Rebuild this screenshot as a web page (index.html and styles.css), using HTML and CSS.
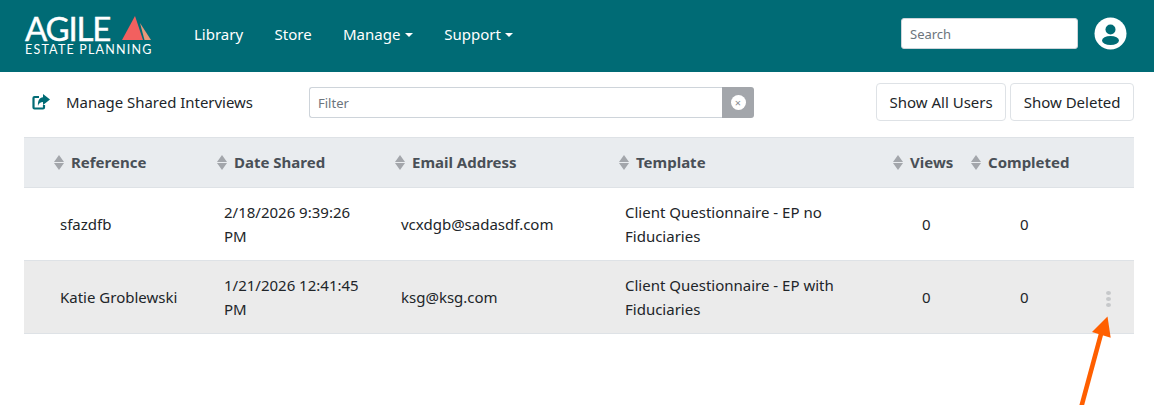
FILE: index.html
```html
<!DOCTYPE html>
<html lang="en">
<head>
<meta charset="utf-8">
<title>Manage Shared Interviews</title>
<link rel="stylesheet" href="styles.css">
</head>
<body>
<nav class="navbar">
  <a class="brand">
    <span class="brand-top"><span class="brand-agile">AGILE</span>
      <svg class="brand-mark" width="30" height="25" viewBox="0 0 30 25"><polygon points="13,1 0,25 21,25" fill="#f2605f"/><polygon points="18,8 29,25 22.500,25" fill="#e8987a"/></svg>
    </span>
    <span class="brand-sub">ESTATE PLANNING</span>
  </a>
  <ul class="nav-links">
    <li>Library</li>
    <li>Store</li>
    <li class="caret">Manage</li>
    <li class="caret">Support</li>
  </ul>
  <input class="nav-search" type="text" placeholder="Search">
  <svg class="avatar" width="33" height="33" viewBox="0 0 33 33"><circle cx="16.500" cy="16.500" r="16" fill="#fff"/><circle cx="16.500" cy="12.500" r="5" fill="#006b75"/><ellipse cx="16.500" cy="23.500" rx="8.500" ry="4.500" fill="#006b75"/></svg>
</nav>

<main class="content">
  <div class="toolbar">
    <svg class="share-icon" width="18" height="16" viewBox="0 0 18 16"><path d="M7 3H2.500A1 1 0 0 0 1.500 4v9.500a1 1 0 0 0 1 1H11a1 1 0 0 0 1-1V11" fill="none" stroke="#006b75" stroke-width="2.200"/><path d="M11 0l7 5.500-7 5.500V8C8.500 8 7 9 6 12 5.500 7 7.500 3.500 11 3.300z" fill="#006b75"/></svg>
    <span class="page-title">Manage Shared Interviews</span>
    <div class="filter">
      <input class="filter-input" type="text" placeholder="Filter">
      <span class="filter-clear"><span class="clear-dot">×</span></span>
    </div>
    <div class="toolbar-buttons">
      <button class="btn">Show All Users</button>
      <button class="btn">Show Deleted</button>
    </div>
  </div>

  <table class="grid">
    <colgroup>
      <col class="c-ref"><col class="c-date"><col class="c-email"><col class="c-tpl"><col class="c-views"><col class="c-done"><col class="c-menu">
    </colgroup>
    <thead>
      <tr>
        <th><span class="sort"></span>Reference</th>
        <th><span class="sort"></span>Date Shared</th>
        <th><span class="sort"></span>Email Address</th>
        <th><span class="sort"></span>Template</th>
        <th><span class="sort"></span>Views</th>
        <th><span class="sort"></span>Completed</th>
        <th></th>
      </tr>
    </thead>
    <tbody>
      <tr>
        <td>sfazdfb</td>
        <td class="date">2/18/2026 9:39:26 PM</td>
        <td>vcxdgb@sadasdf.com</td>
        <td>Client Questionnaire - EP no Fiduciaries</td>
        <td class="num-views">0</td>
        <td class="num-done">0</td>
        <td></td>
      </tr>
      <tr class="hover">
        <td>Katie Groblewski</td>
        <td class="date">1/21/2026 12:41:45 PM</td>
        <td>ksg@ksg.com</td>
        <td>Client Questionnaire - EP with Fiduciaries</td>
        <td class="num-views">0</td>
        <td class="num-done">0</td>
        <td class="menu"><span class="dots"><i></i><i></i><i></i></span></td>
      </tr>
    </tbody>
  </table>
</main>

<svg class="arrow" width="40" height="92" viewBox="0 0 40 92"><path d="M29 18 9.500 90" stroke="#ff5f00" stroke-width="4.600" fill="none"/><polygon points="35.500,0.500 20,16 38.700,21.700" fill="#ff5f00"/></svg>
</body>
</html>
```
FILE: styles.css
```css
* { box-sizing: border-box; }
html, body { margin: 0; padding: 0; }
body {
  position: relative;
  height: 405px;
  overflow: hidden;
  background: #fff;
  color: #212529;
  font-family: "Noto Sans", "Open Sans", sans-serif;
  font-size: 15px;
  line-height: 24px;
}
.navbar {
  display: flex;
  align-items: center;
  height: 72px;
  padding: 0 27px 5px 25px;
  background: #006b75;
}
.brand { display: flex; flex-direction: column; width: 129px; color: #fff; margin-top: 5px; }
.brand-top { display: flex; align-items: flex-end; height: 25px; }
.brand-agile {
  font-family: Lato, sans-serif;
  font-size: 33px;
  line-height: 24px;
  letter-spacing: -1.2px;
  width: 97px;
  flex: none;
  -webkit-text-stroke: 0.4px #fff;
}
.brand-sub {
  font-family: Lato, sans-serif;
  font-size: 12.500px;
  line-height: 14px;
  letter-spacing: 1.200px;
  white-space: nowrap;
  margin-top: 3px;
}
.nav-links { display: flex; gap: 31.400px; margin: 0 0 0 40px; padding: 0; list-style: none; color: #fff; }
.caret::after {
  content: "";
  display: inline-block;
  margin-left: 4.500px;
  vertical-align: 3px;
  border-top: 4px solid #fff;
  border-left: 4px solid transparent;
  border-right: 4px solid transparent;
}
.nav-search {
  width: 177px;
  height: 31px;
  margin-left: auto;
  padding: 0 8px;
  border: 1px solid #ced4da;
  border-radius: 3px;
  font: inherit;
  font-size: 13px;
}
.avatar { margin-left: 16px; }
input::placeholder { color: #6c757d; opacity: 1; }
.content { padding: 11px 20px 0 24px; }
.toolbar { display: flex; align-items: center; height: 38px; }
.share-icon { margin-left: 8px; flex: none; }
.page-title { margin-left: 16px; width: 243px; font-size: 14.950px; white-space: nowrap; }
.filter { display: flex; width: 445px; height: 31px; }
.filter-input {
  flex: 1;
  min-width: 0;
  padding: 1px 8px 0;
  border: 1px solid #ced4da;
  border-right: 0;
  border-radius: 3px 0 0 3px;
  font: inherit;
  font-size: 13px;
}
.filter-clear {
  display: flex;
  align-items: center;
  justify-content: center;
  width: 32px;
  background: #a3a6ab;
  border-radius: 0 3px 3px 0;
}
.clear-dot {
  display: block;
  width: 15px;
  height: 15px;
  border-radius: 50%;
  background: #fff;
  color: #8a8d92;
  font-size: 11px;
  line-height: 15px;
  text-align: center;
}
.toolbar-buttons { display: flex; gap: 4px; margin-left: auto; }
.btn {
  height: 38px;
  padding: 0 12.500px;
  border: 1px solid #dee2e6;
  border-radius: 4px;
  background: #fff;
  color: #212529;
  font: inherit;
}
.grid { width: 1110px; margin-top: 16px; border-collapse: collapse; table-layout: fixed; }
.c-ref { width: 163px; }
.c-date { width: 178px; }
.c-email { width: 224px; }
.c-tpl { width: 274px; }
.c-views { width: 78px; }
.c-done { width: 122px; }
.c-menu { width: 71px; }
.grid th {
  height: 50px;
  padding: 0 0 2px 30px;
  background: #e9ecef;
  border-top: 1px solid #dee2e6;
  border-bottom: 1px solid #dee2e6;
  color: #495057;
  font-weight: 700;
  text-align: left;
  white-space: nowrap;
}
.sort {
  position: relative;
  display: inline-block;
  width: 11px;
  height: 15px;
  margin-right: 6px;
  vertical-align: -2px;
}
.sort::before, .sort::after {
  content: "";
  position: absolute;
  left: 0;
  border-left: 5.500px solid transparent;
  border-right: 5.500px solid transparent;
}
.sort::before { top: 0; border-bottom: 7px solid #a3a6ab; }
.sort::after { bottom: 0; border-top: 7px solid #a3a6ab; }
.grid td {
  height: 73px;
  padding: 0 6px 0 36px;
  border-bottom: 1px solid #dee2e6;
  vertical-align: middle;
}
.grid td.date { padding-left: 37px; padding-right: 5px; }
.grid td.num-views { padding-left: 59px; }
.grid td.num-done { padding-left: 79px; }
.hover td { background: #ebebeb; }
.menu { text-align: right; }
.grid td.menu { padding-right: 23px; padding-left: 0; }
.dots { display: inline-flex; flex-direction: column; gap: 2px; vertical-align: middle; }
.dots i { display: block; width: 5px; height: 4px; border-radius: 50%; background: #c6c8ca; }
.arrow { position: absolute; left: 1072px; top: 316px; }
```
